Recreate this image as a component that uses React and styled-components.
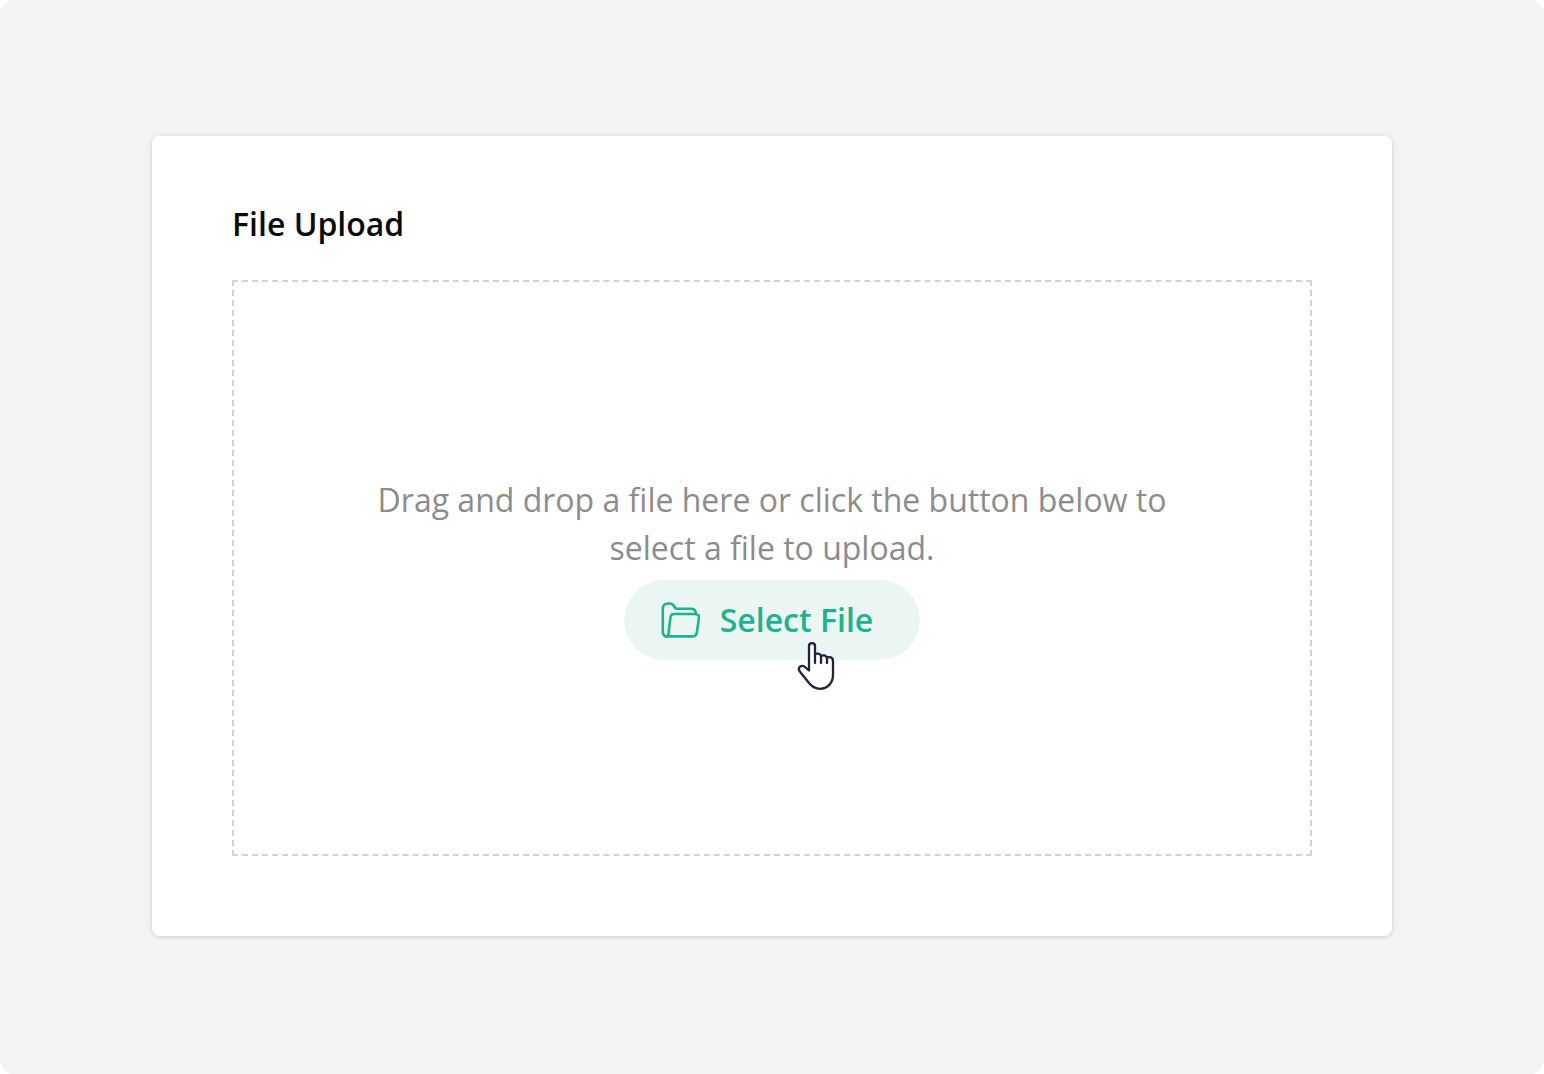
import React, { useRef } from "react";
import styled, { createGlobalStyle } from "styled-components";

const GlobalStyle = createGlobalStyle`
  *, *::before, *::after { box-sizing: border-box; }
  body {
    margin: 0;
    background: #ffffff;
    font-family: "Open Sans", "Noto Sans", sans-serif;
    font-size: 32px;
    line-height: 48px;
  }
`;

const Page = styled.main`
  min-height: 100vh;
  padding: 136px 152px;
  border-radius: 14px;
  background: #f3f3f3;
`;

const Card = styled.section`
  padding: 64px 80px 80px;
  border-radius: 8px;
  background: #ffffff;
  box-shadow: 0 1px 4px rgba(0, 0, 0, 0.18);
`;

const Title = styled.h1`
  margin: 0 0 32px;
  font-size: 32px;
  font-weight: 600;
  color: #0b0b0b;
`;

const DropZone = styled.div`
  display: flex;
  flex-direction: column;
  align-items: center;
  justify-content: center;
  gap: 8px;
  min-height: 576px;
  padding: 40px;
  border: 2px dashed #d2d2d2;
`;

const Hint = styled.p`
  max-width: 840px;
  margin: 0;
  text-align: center;
  color: #8c8c8c;
`;

const Action = styled.div`
  position: relative;
`;

const SelectButton = styled.button`
  display: flex;
  align-items: center;
  gap: 20px;
  height: 80px;
  padding: 0 47px 0 36px;
  border: 0;
  border-radius: 40px;
  background: #ebf5f2;
  color: #1eb28e;
  font: inherit;
  font-weight: 600;
  cursor: pointer;
`;

const FileInput = styled.input`
  display: none;
`;

const Pointer = styled.svg`
  position: absolute;
  left: 172px;
  top: 60px;
  pointer-events: none;
`;

function FolderIcon() {
  return (
    <svg
      width="40"
      height="40"
      viewBox="0 0 40 40"
      fill="none"
      stroke="currentColor"
      strokeWidth="2.6"
      strokeLinecap="round"
      strokeLinejoin="round"
      aria-hidden="true"
    >
      <path d="M7 36.400C4.400 36.400 2.800 34.800 2.800 32V8.600C2.800 5.400 4.800 3.500 7.800 3.500H9.600C12 3.500 13.400 4.600 14.200 6.400C14.900 8 15.600 8.700 17.200 8.700H31.200C34 8.700 35.200 10 35.500 11.800L35.900 14.200" />
      <path d="M14 14H35.200C38.100 14 39.300 15.600 38.900 18.200L36.900 32.200C36.500 35 35 36.400 32.200 36.400H6.600C7.700 36.400 8.300 35.400 8.500 34L10.500 17.200C10.800 15 11.900 14 14 14Z" />
    </svg>
  );
}

function HandPointer() {
  return (
    <Pointer width="40" height="52" viewBox="0 0 40 52" aria-hidden="true">
      <path
        d="M13 30.500V6.200C13 2.200 19 2.200 19 6.200V14.500C20.500 13 24.200 13.300 25 16C26.800 14.700 30 15.200 30.800 17.600C33 16.400 37 17.200 37 21V35C37 43 31.500 48.800 24 48.800C19.500 48.800 16 46.500 13.200 43.300L4.200 32C2.500 29.800 2.400 28.500 3.400 27.200C4.700 25.500 7.300 25.500 9 27L13 30.500Z"
        fill="#ffffff"
        stroke="#22223a"
        strokeWidth="2.300"
        strokeLinejoin="round"
      />
      <path
        d="M19 14V23M25 16V23M31 17.500V23"
        fill="none"
        stroke="#22223a"
        strokeWidth="2.300"
        strokeLinecap="round"
      />
    </Pointer>
  );
}

export default function App() {
  const fileInput = useRef(null);

  return (
    <>
      <GlobalStyle />
      <Page>
        <Card aria-labelledby="upload-title">
          <Title id="upload-title">File Upload</Title>
          <DropZone>
            <Hint>
              Drag and drop a file here or click the button below to select a
              file to upload.
            </Hint>
            <Action>
              <SelectButton
                type="button"
                onClick={() => fileInput.current.click()}
              >
                <FolderIcon />
                Select File
              </SelectButton>
              <FileInput
                ref={fileInput}
                type="file"
                aria-labelledby="upload-title"
              />
              <HandPointer />
            </Action>
          </DropZone>
        </Card>
      </Page>
    </>
  );
}
